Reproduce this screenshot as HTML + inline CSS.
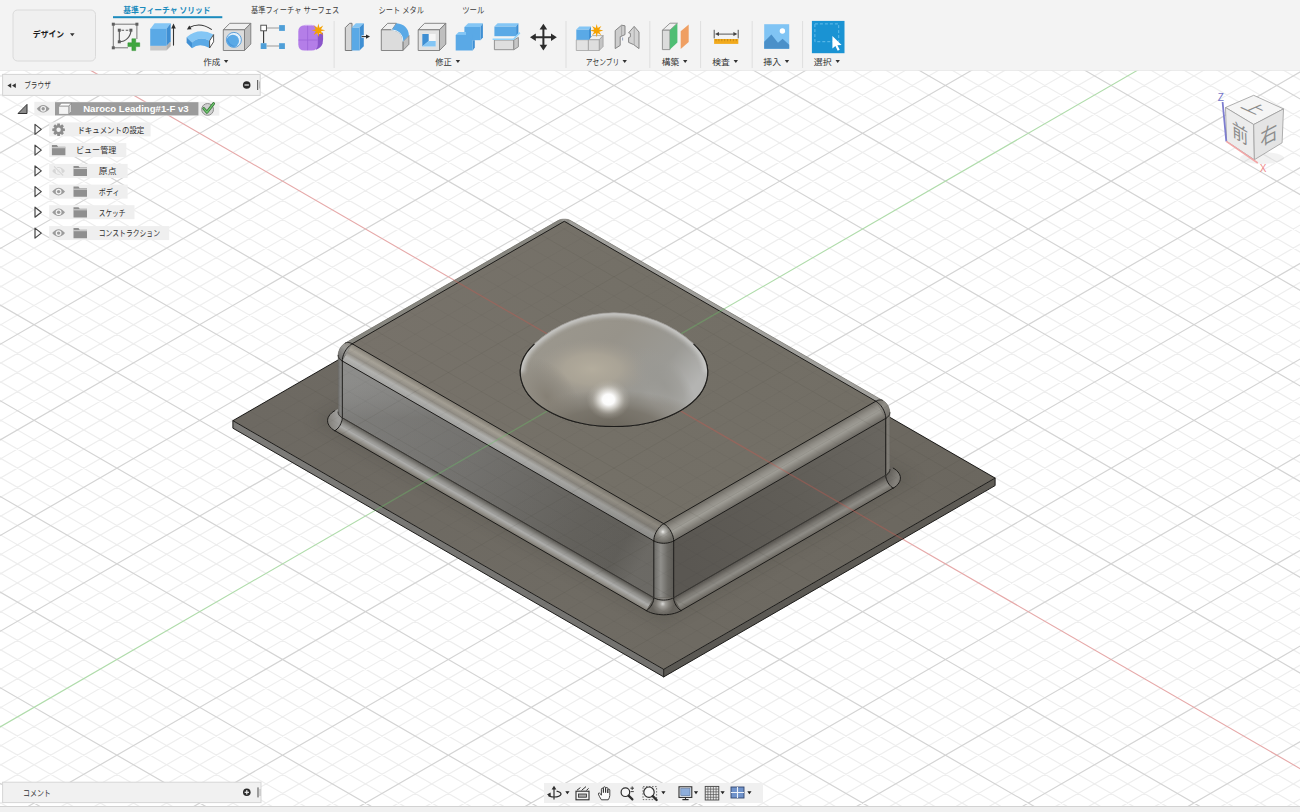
<!DOCTYPE html><html lang="ja"><head><meta charset="utf-8"><title>Fusion</title><style>
html,body{margin:0;padding:0;}
body{width:1300px;height:812px;position:relative;overflow:hidden;background:#fff;font-family:"Liberation Sans",sans-serif;}
#ui text{font-family:"Liberation Sans","Noto Sans CJK JP",sans-serif;}
</style></head><body>
<svg width="0" height="0" style="position:absolute"><defs><linearGradient id="dmA" x1="0" y1="0" x2="1" y2="0.5"><stop offset="0" stop-color="#9d998f"/><stop offset="0.5" stop-color="#97938a"/><stop offset="0.8" stop-color="#9b9a95"/><stop offset="1" stop-color="#b4b4b2"/></linearGradient><radialGradient id="dmTan"><stop offset="0" stop-color="#b5ae9e" stop-opacity="0.95"/><stop offset="0.5" stop-color="#afa899" stop-opacity="0.75"/><stop offset="1" stop-color="#a39d92" stop-opacity="0"/></radialGradient><radialGradient id="dmRband"><stop offset="0" stop-color="#989792" stop-opacity="0.9"/><stop offset="0.6" stop-color="#9a9994" stop-opacity="0.6"/><stop offset="1" stop-color="#9c9b96" stop-opacity="0"/></radialGradient><radialGradient id="dmLeft"><stop offset="0" stop-color="#837d72" stop-opacity="0.9"/><stop offset="0.6" stop-color="#8a857b" stop-opacity="0.5"/><stop offset="1" stop-color="#8a857b" stop-opacity="0"/></radialGradient><radialGradient id="dmLow"><stop offset="0" stop-color="#6a655b" stop-opacity="0.97"/><stop offset="0.5" stop-color="#746f65" stop-opacity="0.85"/><stop offset="0.8" stop-color="#7f7a70" stop-opacity="0.45"/><stop offset="1" stop-color="#857f75" stop-opacity="0"/></radialGradient><radialGradient id="dmHi"><stop offset="0" stop-color="#ffffff" stop-opacity="1"/><stop offset="0.27" stop-color="#ffffff" stop-opacity="0.97"/><stop offset="0.5" stop-color="#f0eee9" stop-opacity="0.65"/><stop offset="0.75" stop-color="#d2cfc7" stop-opacity="0.25"/><stop offset="1" stop-color="#bcb8ae" stop-opacity="0"/></radialGradient><clipPath id="cpDome"><path d="M534.5 343.8A117.2 117.2 0 0 1 693.5 343.8A93.7 54.1 0 1 1 534.5 343.8Z"/></clipPath></defs></svg>
<svg id="scene" width="1300" height="812" viewBox="0 0 1300 812" style="position:absolute;left:0;top:0">
<defs><linearGradient id="g1" gradientUnits="userSpaceOnUse" x1="232.9" y1="420.7" x2="995.1" y2="478.1"><stop offset="0" stop-color="#6d6962"/><stop offset="0.5" stop-color="#6f6b63"/><stop offset="1" stop-color="#6b675f"/></linearGradient><linearGradient id="g2" gradientUnits="userSpaceOnUse" x1="232.9" y1="420.7" x2="663.7" y2="669.4"><stop offset="0" stop-color="#7d7c79"/><stop offset="1" stop-color="#73726f"/></linearGradient><linearGradient id="g3" gradientUnits="userSpaceOnUse" x1="663.7" y1="669.4" x2="995.1" y2="478.1"><stop offset="0" stop-color="#5a5853"/><stop offset="1" stop-color="#5f5c56"/></linearGradient><clipPath id="cpPlate"><polygon points="232.9,420.7 663.7,669.4 995.1,478.1 564.3,229.4"/></clipPath><filter id="blur6" x="-20%" y="-20%" width="140%" height="140%"><feGaussianBlur stdDeviation="7"/></filter><filter id="blur2" x="-50%" y="-50%" width="200%" height="200%"><feGaussianBlur stdDeviation="2.2"/></filter><filter id="blur4" x="-50%" y="-50%" width="200%" height="200%"><feGaussianBlur stdDeviation="4"/></filter><linearGradient id="g4" gradientUnits="userSpaceOnUse" x1="342.3" y1="417.8" x2="334.8" y2="430.7"><stop offset="0" stop-color="#5f5d58"/><stop offset="0.3" stop-color="#8f8e8a"/><stop offset="0.55" stop-color="#adadab"/><stop offset="0.8" stop-color="#918e87"/><stop offset="1" stop-color="#716d65"/></linearGradient><linearGradient id="g5" gradientUnits="userSpaceOnUse" x1="673.7" y1="597.7" x2="681.1" y2="610.6"><stop offset="0" stop-color="#56534e"/><stop offset="0.35" stop-color="#7d7a74"/><stop offset="0.6" stop-color="#8e8c86"/><stop offset="1" stop-color="#6a665f"/></linearGradient><radialGradient id="g6" gradientUnits="userSpaceOnUse" cx="662.7" cy="603.8" r="11"><stop offset="0" stop-color="#d8d8d6"/><stop offset="0.25" stop-color="#a3a19c"/><stop offset="0.6" stop-color="#807d77"/><stop offset="1" stop-color="#66635d"/></radialGradient><linearGradient id="g7" gradientUnits="userSpaceOnUse" x1="352.2" y1="412.1" x2="322.4" y2="417.8"><stop offset="0" stop-color="#8f8f8d"/><stop offset="0.5" stop-color="#9e9d9a"/><stop offset="1" stop-color="#77746d"/></linearGradient><linearGradient id="g8" gradientUnits="userSpaceOnUse" x1="885.7" y1="475.2" x2="908.1" y2="485.3"><stop offset="0" stop-color="#5e5b56"/><stop offset="0.5" stop-color="#85827c"/><stop offset="1" stop-color="#6a665f"/></linearGradient><linearGradient id="g9" gradientUnits="userSpaceOnUse" x1="352.2" y1="343.8" x2="875.8" y2="401.2"><stop offset="0" stop-color="#77726a"/><stop offset="0.5" stop-color="#747067"/><stop offset="1" stop-color="#726e65"/></linearGradient><linearGradient id="g10" gradientUnits="userSpaceOnUse" x1="342.3" y1="361" x2="653.8" y2="540.9"><stop offset="0" stop-color="#8e8e8c"/><stop offset="0.45" stop-color="#7e7d7a"/><stop offset="0.8" stop-color="#6b6964"/><stop offset="0.93" stop-color="#676560"/><stop offset="1" stop-color="#75736e"/></linearGradient><linearGradient id="g11" gradientUnits="userSpaceOnUse" x1="342.3" y1="361" x2="342.3" y2="417.8"><stop offset="0" stop-color="#a0a09e" stop-opacity="0.05"/><stop offset="0.3" stop-color="#808080" stop-opacity="0"/><stop offset="1" stop-color="#3c3a36" stop-opacity="0.17"/></linearGradient><linearGradient id="g12" gradientUnits="userSpaceOnUse" x1="673.7" y1="540.9" x2="885.7" y2="418.4"><stop offset="0" stop-color="#5a5752"/><stop offset="0.5" stop-color="#605d57"/><stop offset="1" stop-color="#696660"/></linearGradient><linearGradient id="g13" gradientUnits="userSpaceOnUse" x1="352.2" y1="343.8" x2="342.3" y2="361"><stop offset="0" stop-color="#807b71"/><stop offset="0.28" stop-color="#a39e93"/><stop offset="0.5" stop-color="#8f8b83"/><stop offset="0.72" stop-color="#b0b0ad"/><stop offset="1" stop-color="#a0a09e"/></linearGradient><linearGradient id="g14" gradientUnits="userSpaceOnUse" x1="352.2" y1="343.8" x2="663.7" y2="523.7"><stop offset="0" stop-color="#ffffff" stop-opacity="0.06"/><stop offset="0.5" stop-color="#55534e" stop-opacity="0.0"/><stop offset="1" stop-color="#55534e" stop-opacity="0.3"/></linearGradient><linearGradient id="g15" gradientUnits="userSpaceOnUse" x1="663.7" y1="523.7" x2="673.7" y2="540.9"><stop offset="0" stop-color="#6d6a63"/><stop offset="0.3" stop-color="#8f8c85"/><stop offset="0.55" stop-color="#a09e97"/><stop offset="0.8" stop-color="#85827b"/><stop offset="1" stop-color="#6f6c66"/></linearGradient><linearGradient id="g16" gradientUnits="userSpaceOnUse" x1="352.2" y1="343.8" x2="345.2" y2="343.1"><stop offset="0" stop-color="#87867f"/><stop offset="0.6" stop-color="#8e8e8a"/><stop offset="1" stop-color="#a2a29e"/></linearGradient><linearGradient id="g17" gradientUnits="userSpaceOnUse" x1="564.3" y1="221.3" x2="570.1" y2="220.1"><stop offset="0" stop-color="#85837c"/><stop offset="0.6" stop-color="#8d8c87"/><stop offset="1" stop-color="#a09f9b"/></linearGradient><linearGradient id="g18" gradientUnits="userSpaceOnUse" x1="653.8" y1="540.9" x2="673.7" y2="540.9"><stop offset="0" stop-color="#6a6965"/><stop offset="0.35" stop-color="#908f8b"/><stop offset="0.7" stop-color="#6c6a65"/><stop offset="1" stop-color="#5c5a55"/></linearGradient><linearGradient id="g19" gradientUnits="userSpaceOnUse" x1="338.1" y1="361" x2="342.3" y2="361"><stop offset="0" stop-color="#6b6b69"/><stop offset="0.5" stop-color="#81817f"/><stop offset="1" stop-color="#8e8e8c"/></linearGradient><linearGradient id="g20" gradientUnits="userSpaceOnUse" x1="885.7" y1="418.4" x2="889.9" y2="418.4"><stop offset="0" stop-color="#6c6963"/><stop offset="0.5" stop-color="#817e78"/><stop offset="1" stop-color="#74716b"/></linearGradient><radialGradient id="g21" gradientUnits="userSpaceOnUse" cx="662.9" cy="531.8" r="11"><stop offset="0" stop-color="#efefed"/><stop offset="0.18" stop-color="#b9b8b4"/><stop offset="0.5" stop-color="#8d8b85"/><stop offset="1" stop-color="#6b6963"/></radialGradient><linearGradient id="g22" gradientUnits="userSpaceOnUse" x1="352.2" y1="343.8" x2="338.1" y2="355.3"><stop offset="0" stop-color="#8d8981"/><stop offset="0.45" stop-color="#9b9a96"/><stop offset="1" stop-color="#747472"/></linearGradient><linearGradient id="g23" gradientUnits="userSpaceOnUse" x1="875.8" y1="401.2" x2="889.9" y2="412.7"><stop offset="0" stop-color="#76736c"/><stop offset="0.5" stop-color="#8f8d86"/><stop offset="1" stop-color="#77746e"/></linearGradient>
<clipPath id="cpModel"><polygon points="232.9,420.7 663.7,669.4 995.1,478.1 564.3,229.4"/><polygon points="232.9,420.7 663.7,669.4 995.1,478.1 995.1,485.6 663.7,676.9 232.9,428.2"/><polygon points="338.1,355.3 338.2,354 338.6,351.8 339.3,349.8 340.2,347.9 341.5,346.2 342.9,344.7 344.4,343.6 345.2,343.1 559,220.1 559.6,219.7 562.3,219.2 562.9,219 563.6,219 564.3,219 565,219 565.6,219 566.3,219.2 569,219.7 569.6,220.1 882.8,400.5 883.6,401 885.1,402.1 886.5,403.6 887.8,405.3 888.7,407.2 889.4,409.2 889.8,411.4 889.9,412.7 889.9,469.5 885.8,475.2 673.6,597.7 653.8,597.7 342.2,417.8 338.1,412.1"/><polygon points="327.6,420.7 327.8,418.9 328.4,417 329.5,415.3 330.9,413.6 332.7,412.1 334.8,410.7 342.2,406.4 342.2,417.8 342.2,419 342,420.2 341.7,421.5 341.2,422.7 340.7,424 340.1,425.2 339.3,426.4 338.5,427.4 337.6,428.4 336.7,429.3 335.8,430.1 334.8,430.8 332.7,429.4 330.9,427.8 329.5,426.1 328.4,424.4 327.8,422.6"/><path d="M534.5 343.8A117.2 117.2 0 0 1 693.5 343.8A93.7 54.1 0 1 1 534.5 343.8Z"/></clipPath>
<clipPath id="cpTop"><polygon points="352.2,343.8 663.7,523.7 875.8,401.2 564.3,221.3"/></clipPath>
<g id="gridg"><path d="M-2 801.3L19.9 814M-2 763.1L86.2 814M-2 743.9L119.4 814M-2 724.8L152.5 814M-2 705.7L185.6 814M-2 77.6L28.5 60M-2 667.4L251.9 814M-2 96.7L61.6 60M-2 648.3L285.1 814M-2 115.9L94.8 60M-2 629.1L318.2 814M-2 135L127.9 60M-2 610L351.3 814M-2 173.3L194.2 60M-2 571.7L417.6 814M-2 192.4L227.3 60M-2 552.6L450.8 814M-2 211.5L260.5 60M-2 533.5L483.9 814M-2 230.7L293.6 60M-2 514.3L517 814M-2 268.9L359.9 60M-2 476.1L583.3 814M-2 288.1L393 60M-2 456.9L616.5 814M-2 307.2L426.2 60M-2 437.8L649.6 814M-2 326.3L459.3 60M-2 418.7L682.7 814M-2 364.6L525.6 60M-2 380.4L749 814M-2 383.7L558.7 60M-2 361.3L782.2 814M-2 402.9L591.9 60M-2 342.1L815.3 814M-2 422L625 60M-2 323L848.4 814M-2 460.3L691.3 60M-2 284.7L914.7 814M-2 479.4L724.4 60M-2 265.6L947.9 814M-2 498.6L757.6 60M-2 246.4L981 814M-2 517.7L790.7 60M-2 227.3L1014.1 814M-2 556L857 60M-2 189L1080.4 814M-2 575.1L890.1 60M-2 169.9L1113.6 814M-2 594.2L923.3 60M-2 150.8L1146.7 814M-2 613.4L956.4 60M-2 131.6L1179.8 814M-2 651.6L1022.7 60M-2 93.4L1246.1 814M-2 670.8L1055.8 60M-2 74.2L1279.3 814M-2 689.9L1089 60M6.5 60L1302 808M-2 709L1122.1 60M39.6 60L1302 788.9M-2 747.3L1188.4 60M105.9 60L1302 750.6M-2 766.4L1221.5 60M139 60L1302 731.5M-2 785.6L1254.7 60M172.2 60L1302 712.3M-2 804.7L1287.8 60M205.3 60L1302 693.2M48.2 814L1302 90.1M271.6 60L1302 654.9M81.3 814L1302 109.2M304.7 60L1302 635.8M114.4 814L1302 128.3M337.9 60L1302 616.7M147.6 814L1302 147.5M371 60L1302 597.5M213.9 814L1302 185.7M437.3 60L1302 559.3M247 814L1302 204.9M470.4 60L1302 540.1M280.1 814L1302 224M503.6 60L1302 521M313.3 814L1302 243.1M536.7 60L1302 501.9M379.6 814L1302 281.4M603 60L1302 463.6M412.7 814L1302 300.5M636.1 60L1302 444.5M445.8 814L1302 319.7M669.3 60L1302 425.3M479 814L1302 338.8M702.4 60L1302 406.2M545.3 814L1302 377.1M768.7 60L1302 367.9M578.4 814L1302 396.2M801.8 60L1302 348.8M611.5 814L1302 415.4M835 60L1302 329.6M644.7 814L1302 434.5M868.1 60L1302 310.5M711 814L1302 472.8M934.4 60L1302 272.2M744.1 814L1302 491.9M967.5 60L1302 253.1M777.2 814L1302 511M1000.7 60L1302 234M810.4 814L1302 530.2M1033.8 60L1302 214.8M876.7 814L1302 568.4M1100.1 60L1302 176.6M909.8 814L1302 587.6M1133.2 60L1302 157.4M942.9 814L1302 606.7M1166.4 60L1302 138.3M976.1 814L1302 625.8M1199.5 60L1302 119.2M1042.4 814L1302 664.1M1265.8 60L1302 80.9M1075.5 814L1302 683.2M1298.9 60L1302 61.8M1108.6 814L1302 702.4M1141.8 814L1302 721.5M1208.1 814L1302 759.8M1241.2 814L1302 778.9M1274.3 814L1302 798" stroke="#eeeeee" stroke-width="1.2" fill="none"/><path d="M-2 782.2L53.1 814M-2 686.5L218.8 814M-2 154.1L161 60M-2 590.9L384.5 814M-2 249.8L326.7 60M-2 495.2L550.2 814M-2 345.5L492.4 60M-2 399.5L715.9 814M-2 441.1L658.1 60M-2 303.9L881.6 814M-2 536.8L823.8 60M-2 208.2L1047.3 814M-2 632.5L989.5 60M-2 112.5L1213 814M15 814L1302 70.9M238.5 60L1302 674.1M180.7 814L1302 166.6M404.2 60L1302 578.4M346.4 814L1302 262.3M569.9 60L1302 482.7M512.1 814L1302 358M735.6 60L1302 387M677.8 814L1302 453.6M901.3 60L1302 291.4M843.5 814L1302 549.3M1067 60L1302 195.7M1009.2 814L1302 645M1232.7 60L1302 100M1174.9 814L1302 740.6" stroke="#d4d4d4" stroke-width="1.2" fill="none"/></g>
<g id="axes"><line x1="-1043" y1="-584.2" x2="2271" y2="1329.2" stroke="#e6a9a9" stroke-width="1.1"/><line x1="-1043" y1="1329.2" x2="2271" y2="-584.2" stroke="#b0dcab" stroke-width="1.1"/></g>
</defs>
<rect width="1300" height="812" fill="#fff"/>
<use href="#gridg"/><use href="#axes"/>
<g id="mdl">
<polygon points="232.9,420.7 663.7,669.4 995.1,478.1 564.3,229.4" fill="url(#g1)" />
<polygon points="232.9,420.7 663.7,669.4 663.7,676.9 232.9,428.2" fill="url(#g2)" />
<polygon points="663.7,669.4 995.1,478.1 995.1,485.6 663.7,676.9" fill="url(#g3)" />
<g clip-path="url(#cpPlate)"><polygon points="312.4,420.7 663.7,623.5 915.6,478.1 564.3,275.3" fill="#4e4b45" opacity="0.30" filter="url(#blur6)"/></g>
<path d="M564.3 229.4 L232.9 420.7 L663.7 669.4 L995.1 478.1 L564.3 229.4M232.9 420.7 L232.9 428.2 L663.7 676.9 L995.1 485.6 L995.1 478.1M663.7 669.4 L663.7 676.9" fill="none" stroke="#1d1c1a" stroke-width="1" stroke-linejoin="round" stroke-linecap="round"/>
<polygon points="342.3,417.8 653.8,597.7 646.3,610.6 334.8,430.7" fill="url(#g4)" />
<polygon points="673.7,597.7 885.7,475.2 893.2,488.1 681.1,610.6" fill="url(#g5)" />
<polygon points="646.3,610.6 653.8,597.7 673.6,597.7 681.1,610.6 678.7,611.8 676,612.9 673.1,613.7 670.1,614.3 666.9,614.6 663.7,614.8 660.5,614.6 657.3,614.3 654.3,613.7 651.4,612.9 648.7,611.8" fill="url(#g6)" />
<polygon points="327.6,420.7 327.8,418.9 328.4,417 329.5,415.3 330.9,413.6 332.7,412.1 334.8,410.7 342.2,406.4 342.2,417.8 342.2,419 342,420.2 341.7,421.5 341.2,422.7 340.7,424 340.1,425.2 339.3,426.4 338.5,427.4 337.6,428.4 336.7,429.3 335.8,430.1 334.8,430.8 332.7,429.4 330.9,427.8 329.5,426.1 328.4,424.4 327.8,422.6" fill="url(#g7)" />
<polygon points="885.8,463.8 893.2,468.1 895.3,469.5 897.1,471 898.5,472.7 899.6,474.4 900.2,476.2 900.4,478.1 900.2,480 899.6,481.8 898.5,483.5 897.1,485.2 895.3,486.8 893.2,488.1 892.2,487.5 891.3,486.7 890.4,485.9 889.5,484.8 888.7,483.8 887.9,482.6 887.3,481.4 886.8,480.1 886.3,478.9 886,477.6 885.8,476.4 885.8,475.2" fill="url(#g8)" />
<path d="M334.8 430.7 L646.3 610.6M681.1 610.6 L893.2 488.1M646.3 610.6 L648.4 611.7 L650.6 612.6 L653 613.4 L655.6 614 L658.2 614.4 L661 614.7 L663.7 614.8 L666.5 614.7 L669.2 614.4 L671.8 614 L674.4 613.4 L676.8 612.6 L679.1 611.7 L681.1 610.6M334.8 410.7 L333 411.8 L331.4 413.1 L330 414.5 L329 416 L328.2 417.5 L327.7 419.1 L327.6 420.7 L327.7 422.3 L328.2 423.9 L329 425.4 L330 426.9 L331.4 428.3 L333 429.6 L334.8 430.7M893.2 488.1 L895 487 L896.6 485.7 L898 484.3 L899 482.8 L899.8 481.3 L900.3 479.7 L900.4 478.1 L900.3 476.5 L899.8 474.9 L899 473.4 L898 471.9 L896.6 470.5 L895 469.2 L893.2 468.1" fill="none" stroke="#1d1c1a" stroke-width="1" stroke-linejoin="round" stroke-linecap="round"/>
<polygon points="338.1,355.3 338.2,354 338.6,351.8 339.3,349.8 340.2,347.9 341.5,346.2 342.9,344.7 344.4,343.6 345.2,343.1 559,220.1 559.6,219.7 562.3,219.2 562.9,219 563.6,219 564.3,219 565,219 565.6,219 566.3,219.2 569,219.7 569.6,220.1 882.8,400.5 883.6,401 885.1,402.1 886.5,403.6 887.8,405.3 888.7,407.2 889.4,409.2 889.8,411.4 889.9,412.7 889.9,469.5 885.8,475.2 673.6,597.7 653.8,597.7 342.2,417.8 338.1,412.1" fill="#747067" />
<polygon points="352.2,343.8 663.7,523.7 875.8,401.2 564.3,221.3" fill="url(#g9)" />
<polygon points="342.3,361 653.8,540.9 653.8,597.7 342.3,417.8" fill="url(#g10)" />
<polygon points="342.3,361 653.8,540.9 653.8,597.7 342.3,417.8" fill="url(#g11)" />
<polygon points="673.7,540.9 885.7,418.4 885.7,475.2 673.7,597.7" fill="url(#g12)" />
<polygon points="352.2,343.8 663.7,523.7 653.8,540.9 342.3,361" fill="url(#g13)" />
<polygon points="352.2,343.8 663.7,523.7 653.8,540.9 342.3,361" fill="url(#g14)" />
<polygon points="663.7,523.7 875.8,401.2 885.7,418.4 673.7,540.9" fill="url(#g15)" />
<polygon points="352.2,343.8 564.3,221.3 558.5,220.1 345.2,343.1" fill="url(#g16)" />
<polygon points="564.3,221.3 875.8,401.2 882.8,400.5 570.1,220.1" fill="url(#g17)" />
<polygon points="653.8,540.9 673.7,540.9 673.7,597.7 653.8,597.7" fill="url(#g18)" />
<polygon points="342.3,361 338.1,355.3 338.1,412.1 342.3,417.8" fill="url(#g19)" />
<polygon points="885.7,418.4 889.9,412.7 889.9,469.5 885.7,475.2" fill="url(#g20)" />
<polygon points="653.8,540.9 653.8,539.6 654,538.2 654.3,536.8 654.8,535.3 655.3,533.9 655.9,532.5 656.7,531.1 657.5,529.7 658.4,528.5 659.4,527.3 660.4,526.2 661.5,525.2 662.6,524.4 663.7,523.7 664.8,524.4 665.9,525.2 667,526.2 668,527.3 669,528.5 669.9,529.7 670.7,531.1 671.5,532.5 672.1,533.9 672.7,535.3 673.1,536.8 673.4,538.2 673.6,539.6 673.6,540.9 672.5,541.5 671.2,542 669.8,542.5 668.4,542.8 666.8,543 665.3,543.2 663.7,543.2 662.1,543.2 660.6,543 659.1,542.8 657.6,542.5 656.2,542 654.9,541.5" fill="url(#g21)" />
<polygon points="338.1,355.3 338.2,354 338.6,351.8 339.3,349.8 340.2,347.9 341.5,346.2 342.9,344.7 344.4,343.6 345.2,343.1 346,342.7 346.9,342.5 347.9,342.4 348.9,342.6 350,342.8 351.1,343.2 352.2,343.8 342.2,361 341.2,360.3 340.3,359.6 339.5,358.8 338.9,358 338.5,357.1 338.2,356.2" fill="url(#g22)" />
<polygon points="875.8,401.2 876.9,400.6 878,400.2 879.1,399.9 880.1,399.9 881.1,399.9 882,400.1 882.8,400.5 883.6,401 885.1,402.1 886.5,403.6 887.8,405.3 888.7,407.2 889.4,409.2 889.8,411.4 889.9,412.7 889.8,413.6 889.5,414.5 889.1,415.4 888.5,416.2 887.7,417 886.8,417.7 885.8,418.4" fill="url(#g23)" />
<polygon points="559,220.1 559.6,219.7 562.3,219.2 562.9,219 563.6,219 564.3,219 565,219 565.6,219 566.3,219.2 569,219.7 569.6,220.1 564.3,221.3" fill="#9c9b97" />
<path d="M352.2 343.8 L663.7 523.7 L875.8 401.2 L564.3 221.3 L352.2 343.8M342.3 361 L653.8 540.9M342.3 417.8 L653.8 597.7M673.7 540.9 L885.7 418.4M673.7 597.7 L885.7 475.2M653.8 540.9 L653.8 597.7M673.7 540.9 L673.7 597.7M342.3 361 L342.3 417.8M885.7 418.4 L885.7 475.2M663.7 523.7 L662.4 524.5 L661.1 525.5 L659.9 526.7 L658.7 528.1 L657.7 529.5 L656.7 531.1 L655.8 532.7 L655.1 534.4 L654.5 536 L654.1 537.7 L653.9 539.3 L653.8 540.9M663.7 523.7 L665 524.5 L666.3 525.5 L667.5 526.7 L668.7 528.1 L669.8 529.5 L670.7 531.1 L671.6 532.7 L672.3 534.4 L672.9 536 L673.3 537.7 L673.6 539.3 L673.7 540.9M653.8 540.9 L655.2 541.6 L656.7 542.2 L658.3 542.6 L660.1 543 L661.9 543.2 L663.7 543.3 L665.5 543.2 L667.3 543 L669.1 542.6 L670.7 542.2 L672.3 541.6 L673.7 540.9M352.2 343.8 L350.9 344.6 L349.6 345.7 L348.4 346.9 L347.2 348.2 L346.1 349.7 L345.2 351.2 L344.3 352.8 L343.6 354.5 L343 356.2 L342.6 357.9 L342.3 359.5 L342.3 361M342.3 361 L341.6 360.6 L341 360.2 L340.5 359.8 L340 359.3 L339.6 358.9 L339.2 358.4 L338.9 357.9 L338.6 357.4 L338.4 356.9 L338.3 356.3 L338.2 355.8 L338.1 355.3M352.2 343.8 L351.5 343.4 L350.9 343.1 L350.3 342.9 L349.6 342.7 L349 342.6 L348.4 342.5 L347.8 342.4 L347.2 342.5 L346.7 342.5 L346.1 342.7 L345.6 342.9 L345.2 343.1M875.8 401.2 L877.1 402 L878.4 403.1 L879.6 404.3 L880.8 405.6 L881.9 407.1 L882.8 408.6 L883.7 410.2 L884.4 411.9 L885 413.6 L885.4 415.3 L885.7 416.9 L885.7 418.4M885.7 418.4 L886.4 418 L887 417.6 L887.5 417.2 L888 416.7 L888.4 416.3 L888.8 415.8 L889.1 415.3 L889.4 414.8 L889.6 414.3 L889.7 413.7 L889.8 413.2 L889.9 412.7M875.8 401.2 L876.5 400.9 L877.1 400.5 L877.7 400.3 L878.4 400.1 L879 400 L879.6 399.9 L880.2 399.8 L880.8 399.9 L881.3 399.9 L881.9 400.1 L882.4 400.3 L882.8 400.5M653.8 597.7 L655.2 598.4 L656.7 599 L658.3 599.5 L660.1 599.8 L661.9 600 L663.7 600.1 L665.5 600 L667.3 599.8 L669.1 599.5 L670.7 599 L672.3 598.4 L673.7 597.7M342.3 417.8 L341.6 417.4 L341 417 L340.5 416.6 L340 416.2 L339.6 415.7 L339.2 415.2 L338.9 414.7 L338.6 414.2 L338.4 413.7 L338.3 413.2 L338.2 412.6 L338.1 412.1M885.7 475.2 L886.4 474.8 L887 474.4 L887.5 474 L888 473.6 L888.4 473.1 L888.8 472.6 L889.1 472.1 L889.4 471.6 L889.6 471.1 L889.7 470.6 L889.8 470 L889.9 469.5M646.3 610.6 L647.5 609.8 L648.6 608.9 L649.7 607.7 L650.7 606.4 L651.6 605 L652.3 603.6 L653 602.1 L653.4 600.6 L653.7 599.1 L653.8 597.7M681.1 610.6 L679.9 609.8 L678.8 608.9 L677.7 607.7 L676.7 606.4 L675.8 605 L675.1 603.6 L674.5 602.1 L674 600.6 L673.7 599.1 L673.7 597.7M334.8 430.7 L336 430 L337.1 429 L338.2 427.9 L339.2 426.6 L340.1 425.2 L340.8 423.7 L341.4 422.2 L341.9 420.7 L342.2 419.2 L342.3 417.8M893.2 488.1 L892 487.4 L890.9 486.4 L889.8 485.3 L888.8 484 L887.9 482.6 L887.2 481.1 L886.6 479.6 L886.1 478.1 L885.8 476.6 L885.7 475.2" fill="none" stroke="#1d1c1a" stroke-width="1" stroke-linejoin="round" stroke-linecap="round"/>
<path d="M338.1 355.3 L338.2 354 L338.6 351.8 L339.3 349.8 L340.2 347.9 L341.5 346.2 L342.9 344.7 L344.4 343.6 L345.2 343.1 L559 220.1 L559.6 219.7 L562.3 219.2 L562.9 219 L563.6 219 L564.3 219 L565 219 L565.6 219 L566.3 219.2 L569 219.7 L569.6 220.1 L882.8 400.5 L883.6 401 L885.1 402.1 L886.5 403.6 L887.8 405.3 L888.7 407.2 L889.4 409.2 L889.8 411.4 L889.9 412.7 L889.9 469.5 L885.8 475.2 L673.6 597.7 L653.8 597.7 L342.2 417.8 L338.1 412.1 L338.1 355.3" fill="none" stroke="#6b6964" stroke-width="0.7" stroke-linejoin="round" opacity="0.55"/>
<g><path d="M534.5 343.8A117.2 117.2 0 0 1 693.5 343.8A93.7 54.1 0 1 1 534.5 343.8Z" fill="url(#dmA)"/><g clip-path="url(#cpDome)"><ellipse cx="592" cy="369" rx="56" ry="30" fill="url(#dmTan)"/><ellipse cx="664" cy="384" rx="22" ry="44" fill="url(#dmRband)" transform="rotate(-38 664 384)"/><ellipse cx="547" cy="397" rx="28" ry="44" fill="url(#dmLeft)" transform="rotate(-35 547 397)"/><ellipse cx="610" cy="428" rx="100" ry="38" fill="url(#dmLow)"/><path d="M520.3 372.5A93.7 54.1 0 0 1 534.5 343.8A117.2 117.2 0 0 1 693.5 343.8A93.7 54.1 0 0 1 707.7 372.5" fill="none" stroke="#cbcbc9" stroke-width="7.5" filter="url(#blur2)" opacity="0.95"/><ellipse cx="608.5" cy="399.5" rx="22" ry="20" fill="url(#dmHi)"/></g><path d="M534.5 343.8A117.2 117.2 0 0 1 693.5 343.8A93.7 54.1 0 1 1 534.5 343.8Z" fill="none" stroke="#8d8a84" stroke-width="0.8" opacity="0.7"/><path d="M693.5 343.8A93.7 54.1 0 1 1 534.5 343.8" fill="none" stroke="#1d1c1a" stroke-width="1.1"/></g>
</g>
<g clip-path="url(#cpModel)"><g opacity="0.085"><path d="M-2 782.2L53.1 814M-2 686.5L218.8 814M-2 154.1L161 60M-2 590.9L384.5 814M-2 249.8L326.7 60M-2 495.2L550.2 814M-2 345.5L492.4 60M-2 399.5L715.9 814M-2 441.1L658.1 60M-2 303.9L881.6 814M-2 536.8L823.8 60M-2 208.2L1047.3 814M-2 632.5L989.5 60M-2 112.5L1213 814M15 814L1302 70.9M238.5 60L1302 674.1M180.7 814L1302 166.6M404.2 60L1302 578.4M346.4 814L1302 262.3M569.9 60L1302 482.7M512.1 814L1302 358M735.6 60L1302 387M677.8 814L1302 453.6M901.3 60L1302 291.4M843.5 814L1302 549.3M1067 60L1302 195.7M1009.2 814L1302 645M1232.7 60L1302 100M1174.9 814L1302 740.6" stroke="#3a3733" stroke-width="1" fill="none"/></g>
<g opacity="0.035"><path d="M-2 801.3L19.9 814M-2 763.1L86.2 814M-2 743.9L119.4 814M-2 724.8L152.5 814M-2 705.7L185.6 814M-2 77.6L28.5 60M-2 667.4L251.9 814M-2 96.7L61.6 60M-2 648.3L285.1 814M-2 115.9L94.8 60M-2 629.1L318.2 814M-2 135L127.9 60M-2 610L351.3 814M-2 173.3L194.2 60M-2 571.7L417.6 814M-2 192.4L227.3 60M-2 552.6L450.8 814M-2 211.5L260.5 60M-2 533.5L483.9 814M-2 230.7L293.6 60M-2 514.3L517 814M-2 268.9L359.9 60M-2 476.1L583.3 814M-2 288.1L393 60M-2 456.9L616.5 814M-2 307.2L426.2 60M-2 437.8L649.6 814M-2 326.3L459.3 60M-2 418.7L682.7 814M-2 364.6L525.6 60M-2 380.4L749 814M-2 383.7L558.7 60M-2 361.3L782.2 814M-2 402.9L591.9 60M-2 342.1L815.3 814M-2 422L625 60M-2 323L848.4 814M-2 460.3L691.3 60M-2 284.7L914.7 814M-2 479.4L724.4 60M-2 265.6L947.9 814M-2 498.6L757.6 60M-2 246.4L981 814M-2 517.7L790.7 60M-2 227.3L1014.1 814M-2 556L857 60M-2 189L1080.4 814M-2 575.1L890.1 60M-2 169.9L1113.6 814M-2 594.2L923.3 60M-2 150.8L1146.7 814M-2 613.4L956.4 60M-2 131.6L1179.8 814M-2 651.6L1022.7 60M-2 93.4L1246.1 814M-2 670.8L1055.8 60M-2 74.2L1279.3 814M-2 689.9L1089 60M6.5 60L1302 808M-2 709L1122.1 60M39.6 60L1302 788.9M-2 747.3L1188.4 60M105.9 60L1302 750.6M-2 766.4L1221.5 60M139 60L1302 731.5M-2 785.6L1254.7 60M172.2 60L1302 712.3M-2 804.7L1287.8 60M205.3 60L1302 693.2M48.2 814L1302 90.1M271.6 60L1302 654.9M81.3 814L1302 109.2M304.7 60L1302 635.8M114.4 814L1302 128.3M337.9 60L1302 616.7M147.6 814L1302 147.5M371 60L1302 597.5M213.9 814L1302 185.7M437.3 60L1302 559.3M247 814L1302 204.9M470.4 60L1302 540.1M280.1 814L1302 224M503.6 60L1302 521M313.3 814L1302 243.1M536.7 60L1302 501.9M379.6 814L1302 281.4M603 60L1302 463.6M412.7 814L1302 300.5M636.1 60L1302 444.5M445.8 814L1302 319.7M669.3 60L1302 425.3M479 814L1302 338.8M702.4 60L1302 406.2M545.3 814L1302 377.1M768.7 60L1302 367.9M578.4 814L1302 396.2M801.8 60L1302 348.8M611.5 814L1302 415.4M835 60L1302 329.6M644.7 814L1302 434.5M868.1 60L1302 310.5M711 814L1302 472.8M934.4 60L1302 272.2M744.1 814L1302 491.9M967.5 60L1302 253.1M777.2 814L1302 511M1000.7 60L1302 234M810.4 814L1302 530.2M1033.8 60L1302 214.8M876.7 814L1302 568.4M1100.1 60L1302 176.6M909.8 814L1302 587.6M1133.2 60L1302 157.4M942.9 814L1302 606.7M1166.4 60L1302 138.3M976.1 814L1302 625.8M1199.5 60L1302 119.2M1042.4 814L1302 664.1M1265.8 60L1302 80.9M1075.5 814L1302 683.2M1298.9 60L1302 61.8M1108.6 814L1302 702.4M1141.8 814L1302 721.5M1208.1 814L1302 759.8M1241.2 814L1302 778.9M1274.3 814L1302 798" stroke="#3a3733" stroke-width="1" fill="none"/></g>
<line x1="-1043" y1="-584.2" x2="2271" y2="1329.2" stroke="#c85a50" stroke-width="1.4" opacity="0.38"/><line x1="-1043" y1="1329.2" x2="2271" y2="-584.2" stroke="#6cc068" stroke-width="1.4" opacity="0.38"/></g>
<g><path d="M534.5 343.8A117.2 117.2 0 0 1 693.5 343.8A93.7 54.1 0 1 1 534.5 343.8Z" fill="url(#dmA)"/><g clip-path="url(#cpDome)"><ellipse cx="592" cy="369" rx="56" ry="30" fill="url(#dmTan)"/><ellipse cx="664" cy="384" rx="22" ry="44" fill="url(#dmRband)" transform="rotate(-38 664 384)"/><ellipse cx="547" cy="397" rx="28" ry="44" fill="url(#dmLeft)" transform="rotate(-35 547 397)"/><ellipse cx="610" cy="428" rx="100" ry="38" fill="url(#dmLow)"/><path d="M520.3 372.5A93.7 54.1 0 0 1 534.5 343.8A117.2 117.2 0 0 1 693.5 343.8A93.7 54.1 0 0 1 707.7 372.5" fill="none" stroke="#cbcbc9" stroke-width="7.5" filter="url(#blur2)" opacity="0.95"/><ellipse cx="608.5" cy="399.5" rx="22" ry="20" fill="url(#dmHi)"/></g><path d="M534.5 343.8A117.2 117.2 0 0 1 693.5 343.8A93.7 54.1 0 1 1 534.5 343.8Z" fill="none" stroke="#8d8a84" stroke-width="0.8" opacity="0.7"/><path d="M693.5 343.8A93.7 54.1 0 1 1 534.5 343.8" fill="none" stroke="#1d1c1a" stroke-width="1.1"/></g>
</svg>
<svg id="ui" width="1300" height="812" viewBox="0 0 1300 812" style="position:absolute;left:0;top:0"><rect x="0" y="0" width="1300" height="70.3" fill="#f3f3f3"/>
<rect x="0" y="70" width="1300" height="0.8" fill="#e6e6e6"/>
<rect x="13" y="10" width="82.5" height="51" rx="4.5" fill="#f0f0f0" stroke="#dadada" stroke-width="1"/>
<text x="32.8" y="37.4" font-size="8.5" font-weight="bold" fill="#1c1c1c" textLength="31.4" lengthAdjust="spacingAndGlyphs">デザイン</text>
<polygon points="70.0,33.3 74.6,33.3 72.3,36.3" fill="#333"/>
<text x="123.3" y="12.5" font-size="8.5" font-weight="bold" fill="#1b8bbd" textLength="87.3" lengthAdjust="spacingAndGlyphs">基準フィーチャ ソリッド</text>
<rect x="113" y="16.2" width="109.3" height="2" fill="#1b8bbd"/>
<text x="251" y="12.5" font-size="8.5" fill="#3c3c3c" textLength="88.2" lengthAdjust="spacingAndGlyphs">基準フィーチャ サーフェス</text>
<text x="378.6" y="12.5" font-size="8.5" fill="#3c3c3c" textLength="45.3" lengthAdjust="spacingAndGlyphs">シート メタル</text>
<text x="462.2" y="12.5" font-size="8.5" fill="#3c3c3c" textLength="22.2" lengthAdjust="spacingAndGlyphs">ツール</text>
<text x="203.3" y="65.3" font-size="8.5" fill="#333" textLength="17.1" lengthAdjust="spacingAndGlyphs">作成</text>
<polygon points="223.9,60.1 228.29999999999998,60.1 226.1,63.1" fill="#333"/>
<text x="435.2" y="65.3" font-size="8.5" fill="#333" textLength="16.6" lengthAdjust="spacingAndGlyphs">修正</text>
<polygon points="455.7,60.1 460.09999999999997,60.1 457.9,63.1" fill="#333"/>
<text x="585.8" y="65.3" font-size="8.5" fill="#333" textLength="33.4" lengthAdjust="spacingAndGlyphs">アセンブリ</text>
<polygon points="622.5,60.1 626.9000000000001,60.1 624.7,63.1" fill="#333"/>
<text x="661.8" y="65.3" font-size="8.5" fill="#333" textLength="17.4" lengthAdjust="spacingAndGlyphs">構築</text>
<polygon points="683.0,60.1 687.4000000000001,60.1 685.2,63.1" fill="#333"/>
<text x="712.2" y="65.3" font-size="8.5" fill="#333" textLength="17.6" lengthAdjust="spacingAndGlyphs">検査</text>
<polygon points="733.5999999999999,60.1 738.0,60.1 735.8,63.1" fill="#333"/>
<text x="763.3" y="65.3" font-size="8.5" fill="#333" textLength="17.7" lengthAdjust="spacingAndGlyphs">挿入</text>
<polygon points="784.8,60.1 789.2,60.1 787,63.1" fill="#333"/>
<text x="813.8" y="65.3" font-size="8.5" fill="#333" textLength="17.8" lengthAdjust="spacingAndGlyphs">選択</text>
<polygon points="835.5,60.1 839.9000000000001,60.1 837.7,63.1" fill="#333"/>
<rect x="333.6" y="21" width="1" height="47" fill="#dedede"/>
<rect x="565.5" y="21" width="1" height="47" fill="#dedede"/>
<rect x="649.3" y="21" width="1" height="47" fill="#dedede"/>
<rect x="700.1" y="21" width="1" height="47" fill="#dedede"/>
<rect x="751.7" y="21" width="1" height="47" fill="#dedede"/>
<rect x="802.1" y="21" width="1" height="47" fill="#dedede"/><path d="M136.9 24.2H113.3V47.8H128" fill="none" stroke="#727272" stroke-width="0.95"/><path d="M136.9 24.2V39" fill="none" stroke="#727272" stroke-width="0.95"/>
<rect x="111.8" y="22.7" width="3" height="3" fill="#606060"/>
<rect x="135.4" y="22.7" width="3" height="3" fill="#606060"/>
<rect x="111.8" y="46.3" width="3" height="3" fill="#606060"/>
<path d="M119.3 30.2V41.8" stroke="#555" stroke-width="1.1" fill="none"/><path d="M121.5 30.2H129" stroke="#555" stroke-width="1.1" stroke-dasharray="2.6 1.6" fill="none"/>
<path d="M130.9 30.2A11.6 11.6 0 0 1 119.3 41.8" stroke="#555" stroke-width="1.1" fill="none"/>
<rect x="117.8" y="28.7" width="3" height="3" fill="#5c5c5c"/>
<rect x="129.4" y="28.7" width="3" height="3" fill="#5c5c5c"/>
<rect x="117.8" y="40.3" width="3" height="3" fill="#5c5c5c"/>
<path d="M131.9 38.8h3.8v4h4v3.8h-4v4h-3.8v-4h-4v-3.8h4z" fill="#3fa63f" stroke="#2e8f2e" stroke-width="0.5"/>
<polygon points="150.2,28.9 154.6,23.3 170.7,23.3 166.4,28.9" fill="#84c6f5" />
<polygon points="166.4,28.9 170.7,23.3 170.7,41.6 166.4,45.9" fill="#3f8fd3" />
<polygon points="150.2,28.9 166.4,28.9 166.4,45.9 150.2,45.9" fill="#5aa9e6" />
<polygon points="150.2,45.9 166.4,45.9 166.4,50.5 150.2,50.5" fill="#c9c9c9" />
<polygon points="166.4,45.9 170.7,41.6 170.7,46.2 166.4,50.5" fill="#b1b1b1" />
<path d="M173.5 45.6V27" stroke="#333" stroke-width="1.1"/><polygon points="171.2,28.6 173.5,23.6 175.8,28.6" fill="#2c2c2c" />
<path d="M186.6 37.2Q199 26.8 213.6 34.6L209.6 40.8Q199.5 35.6 192 42.6Z" fill="#84c6f5"/>
<path d="M192 42.6Q199.5 35.6 209.6 40.8V48Q199.5 42.6 192 48.2Z" fill="#5aa9e6"/>
<path d="M186.6 37.2L192 42.6V48.2L186.6 42.8Z" fill="#3f8fd3"/>
<path d="M213.6 34.6L209.6 40.8V48L213.6 41.8Z" fill="#fff" stroke="#444" stroke-width="0.9" stroke-linejoin="round"/>
<path d="M211.8 29.6Q200 21.6 189.4 27.6" fill="none" stroke="#333" stroke-width="1.1"/><polygon points="186.9,29.6 191.6,29.3 189.3,25.6" fill="#2c2c2c" />
<polygon points="223.3,29.8 229.8,23.3 250.8,23.3 244.5,29.8" fill="#f0f0f0" stroke="#7a7a7a" stroke-width="0.9" stroke-linejoin="round" />
<polygon points="244.5,29.8 250.8,23.3 250.8,44 244.5,50.5" fill="#bfbfbf" stroke="#7a7a7a" stroke-width="0.9" stroke-linejoin="round" />
<polygon points="223.3,29.8 244.5,29.8 244.5,50.5 223.3,50.5" fill="#dcdcdc" stroke="#7a7a7a" stroke-width="0.9" stroke-linejoin="round" />
<circle cx="233.9" cy="39.9" r="7.5" fill="#e4f1fb" stroke="#4f97d6" stroke-width="0.9"/><circle cx="232.9" cy="40.9" r="6.1" fill="#5aa9e6"/>
<path d="M228.6 36.6A7 7 0 0 0 237.6 45.4A6.4 6.4 0 0 1 228.6 36.6Z" fill="#4a98dc"/>
<path d="M266.5 28H279.2M266.5 46H279.2" stroke="#9a9a9a" stroke-width="1.2"/><path d="M263.6 30.7V43.2" stroke="#333" stroke-width="1.1"/>
<rect x="260.8" y="25.2" width="5.6" height="5.6" fill="#fff" stroke="#444" stroke-width="0.9"/>
<rect x="279.1" y="25.1" width="5.8" height="5.8" fill="#4f9fd8"/>
<rect x="260.7" y="43.2" width="5.8" height="5.8" fill="#4f9fd8"/>
<rect x="279.1" y="43.2" width="5.8" height="5.8" fill="#4f9fd8"/>
<path d="M316 35.5L323 32.5Q323.4 39 322.6 43.5Q321.6 47.4 316 49.8Z" fill="#8a55ca"/>
<path d="M304.8 25.3H311.5Q317.8 25.3 317.8 31.6V44.2Q317.8 50.5 311.5 50.5H304.6Q298.3 50.5 298.3 44.2V31.8Q298.3 25.3 304.8 25.3Z" fill="#b47ee8"/>
<path d="M304.8 25.3H311.5Q317.8 25.3 317.8 31.6" fill="none" stroke="#d3b0f4" stroke-width="1"/>
<path d="M307.6 25.8V50.2M298.5 40H317.6" stroke="#9c66d8" stroke-width="0.8"/>
<polygon points="318.4,23.5 319.47,27.71 323.21,25.49 320.99,29.23 325.2,30.3 320.99,31.37 323.21,35.11 319.47,32.89 318.4,37.1 317.33,32.89 313.59,35.11 315.81,31.37 311.6,30.3 315.81,29.23 313.59,25.49 317.33,27.71" fill="#f5a200" />
<polygon points="345.3,27.6 349.6,23.3 352,23.3 352,50.5 345.3,50.5" fill="#d6d6d6" stroke="#6c6c6c" stroke-width="0.9" stroke-linejoin="round" />
<polygon points="351.6,27.6 355.9,23.3 363.8,23.3 359.5,27.6" fill="#84c6f5" />
<polygon points="359.5,27.6 363.8,23.3 363.8,46.2 359.5,50.5" fill="#3f8fd3" />
<polygon points="351.6,27.6 359.5,27.6 359.5,50.5 351.6,50.5" fill="#5aa9e6" />
<path d="M361.6 36.6H367" stroke="#fff" stroke-width="2.4"/><path d="M361.6 36.6H367" stroke="#2c2c2c" stroke-width="1.1"/><polygon points="366,34.4 370,36.6 366,38.8" fill="#2c2c2c" />
<polygon points="381.3,29.8 387.7,23.3 396.5,23.3 392,29.8" fill="#f0f0f0" stroke="#7a7a7a" stroke-width="0.9" stroke-linejoin="round" />
<path d="M402.9 41.5L408.9 35.5V44.3L402.9 50.5Z" fill="#bfbfbf" stroke="#7a7a7a" stroke-width="0.9" stroke-linejoin="round"/>
<path d="M381.3 50.5V29.8H391Q402.9 30.6 402.9 41.5V50.5Z" fill="#dcdcdc" stroke="#7a7a7a" stroke-width="0.9" stroke-linejoin="round"/>
<path d="M391 29.8Q402.9 30.6 402.9 41.5L408.9 35.5Q408.2 24.6 396.5 23.3L392 29.8Z" fill="#5aa9e6"/>
<path d="M391 29.8Q402.9 30.6 402.9 41.5" fill="none" stroke="#dff0fc" stroke-width="1"/>
<polygon points="418.2,29.8 424.6,23.3 445.8,23.3 439.5,29.8" fill="#f0f0f0" stroke="#7a7a7a" stroke-width="0.9" stroke-linejoin="round" />
<polygon points="439.5,29.8 445.8,23.3 445.8,44.1 439.5,50.5" fill="#bfbfbf" stroke="#7a7a7a" stroke-width="0.9" stroke-linejoin="round" />
<polygon points="418.2,29.8 439.5,29.8 439.5,50.5 418.2,50.5" fill="#e2e2e2" stroke="#7a7a7a" stroke-width="0.9" stroke-linejoin="round" />
<rect x="422.3" y="33.9" width="13.4" height="12.6" fill="#f6f6f6"/>
<polygon points="422.3,33.9 428.7,33.9 428.7,40.9 422.3,46.5" fill="#3f8fd3" />
<polygon points="428.7,40.9 435.7,40.9 435.7,46.5 422.3,46.5" fill="#84c6f5" />
<polygon points="464.4,27 468.2,23.3 482.9,23.3 480.5,27" fill="#84c6f5" />
<polygon points="480.5,27 482.9,23.3 482.9,37.5 480.5,40.2" fill="#3f8fd3" />
<polygon points="464.4,27 480.5,27 480.5,40.2 464.4,40.2" fill="#5aa9e6" />
<polygon points="455.7,34.9 458.7,31.9 466,31.9 466,34.9" fill="#84c6f5" />
<polygon points="472.7,40.2 474.8,40.2 474.8,47.6 472.7,50.5" fill="#3f8fd3" />
<polygon points="455.7,34.9 472.7,34.9 472.7,50.5 455.7,50.5" fill="#5aa9e6" />
<polygon points="464.4,34.9 472.7,34.9 472.7,40.2 480.5,40.2 474.8,40.2 472.7,40.2" fill="#5aa9e6" />
<polygon points="494.4,26.6 497.6,23.3 518.4,23.3 516.1,26.6" fill="#84c6f5" />
<polygon points="516.1,26.6 518.4,23.3 518.4,33.2 516.1,36.2" fill="#3f8fd3" />
<polygon points="494.4,26.6 516.1,26.6 516.1,36.2 494.4,36.2" fill="#5aa9e6" />
<polygon points="494.4,40 513.8,40 513.8,49.7 494.4,49.7" fill="#dedede" stroke="#8a8a8a" stroke-width="0.9" stroke-linejoin="round" />
<polygon points="513.8,40 518.4,37.4 518.4,46.8 513.8,49.7" fill="#c6c6c6" stroke="#8a8a8a" stroke-width="0.9" stroke-linejoin="round" />
<path d="M492.6 39.2H513.6L519.8 32.6" fill="none" stroke="#8fd2fb" stroke-width="1.6"/>
<path d="M543.4 27.200000000000003V47.2M533.4 37.2H553.4" stroke="#2c2c2c" stroke-width="2"/>
<polygon points="539.6,29.6 543.4,23.800000000000004 547.1999999999999,29.6" fill="#2c2c2c" /><polygon points="539.6,44.800000000000004 543.4,50.6 547.1999999999999,44.800000000000004" fill="#2c2c2c" /><polygon points="535.8,33.400000000000006 530.0,37.2 535.8,41.0" fill="#2c2c2c" /><polygon points="551.0,33.400000000000006 556.8,37.2 551.0,41.0" fill="#2c2c2c" />
<polygon points="576.3,39.8 588.4,39.8 588.4,50.5 576.3,50.5" fill="#e2e2e2" stroke="#9a9a9a" stroke-width="0.7" stroke-linejoin="round" />
<polygon points="588.4,39.8 592.4,35.6 603.1,35.6 599.2,39.8" fill="#f2f2f2" stroke="#9a9a9a" stroke-width="0.7" stroke-linejoin="round" />
<polygon points="599.2,39.8 603.1,35.6 603.1,46.6 599.2,50.5" fill="#c4c4c4" stroke="#9a9a9a" stroke-width="0.7" stroke-linejoin="round" />
<polygon points="588.4,39.8 599.2,39.8 599.2,50.5 588.4,50.5" fill="#dedede" stroke="#9a9a9a" stroke-width="0.7" stroke-linejoin="round" />
<polygon points="576.3,29.6 579.3,26.6 591,26.6 589,29.6" fill="#84c6f5" />
<polygon points="589,29.6 591,26.6 591,37 589,39.8" fill="#3f8fd3" />
<polygon points="576.3,29.6 589,29.6 589,39.8 576.3,39.8" fill="#5aa9e6" />
<polygon points="596.7,24.0 597.73,28.11 601.37,25.93 599.19,29.57 603.3,30.6 599.19,31.63 601.37,35.27 597.73,33.09 596.7,37.2 595.67,33.09 592.03,35.27 594.21,31.63 590.1,30.6 594.21,29.57 592.03,25.93 595.67,28.11" fill="#f5a200" />
<path d="M615.2 30.6L621.6 25.2L625 25.8V34.6L620.2 36.8V45.4L615.2 48.6Z" fill="#cdcdcd" stroke="#7c7c7c" stroke-width="0.9" stroke-linejoin="round"/>
<path d="M621.6 25.2V36" fill="none" stroke="#9a9a9a" stroke-width="0.7"/>
<path d="M628.6 32.8L634.2 26.4L639 32V48.6L633.6 44.6L628.6 42.4V37.6L630.4 36.8V33.4Z" fill="#d3d3d3" stroke="#7c7c7c" stroke-width="0.9" stroke-linejoin="round"/>
<path d="M634.2 26.4V44.8" fill="none" stroke="#9a9a9a" stroke-width="0.7"/><path d="M622.6 37.5V40.5" stroke="#7d8fb0" stroke-width="0.8"/>
<polygon points="662.4,30.2 670,23.2 677.4,23.2 669.9,30.2" fill="#efefef" stroke="#808080" stroke-width="0.8" stroke-linejoin="round" />
<polygon points="662.4,30.2 669.9,30.2 669.9,49.6 662.4,49.6" fill="#dcdcdc" stroke="#808080" stroke-width="0.8" stroke-linejoin="round" />
<polygon points="669.9,30.2 677.4,23.2 677.4,42.4 669.9,49.6" fill="#4fbe74" />
<polygon points="680.7,31.2 688.7,24.4 688.7,42 680.7,49" fill="#ef9f62" />
<path d="M714.2 29.8V38.4M738.2 29.8V38.4" stroke="#555" stroke-width="1"/><path d="M717 34.1H735.4" stroke="#555" stroke-width="1"/>
<polygon points="715,34.1 719,32.1 719,36.1" fill="#444" /><polygon points="737.4,34.1 733.4,32.1 733.4,36.1" fill="#444" />
<rect x="714.1" y="39" width="24.2" height="4.9" fill="#f2aa1c"/>
<path d="M716.0 39V41.2M718.9 39V41.2M721.8 39V41.2M724.7 39V41.2M727.6 39V41.2M730.5 39V41.2M733.4 39V41.2M736.3 39V41.2" stroke="#b97f10" stroke-width="0.7"/>
<rect x="764.2" y="24.2" width="25" height="24.6" fill="#80c4f4"/>
<polygon points="764.2,48.8 764.2,41.8 771.4,34.4 778,42.8 782.6,38.8 789.2,44.8 789.2,48.8" fill="#4a90c9" />
<circle cx="782.4" cy="31" r="2.7" fill="#fff"/>
<rect x="811.9" y="20.9" width="32.6" height="32.3" fill="#1a93d3"/>
<rect x="814.9" y="23.9" width="23.8" height="17.8" fill="none" stroke="#63bdeb" stroke-width="1" stroke-dasharray="3 2"/>
<polygon points="832.4,35.9 832.4,48.6 835.4,46 837.7,50.8 839.7,49.8 837.4,45.2 841.6,45" fill="#fff" /><rect x="2.6" y="74.4" width="257.6" height="21" fill="#f1f1f1" stroke="#d4d4d4" stroke-width="1"/>
<polygon points="7.4,85.6 11.2,83.2 11.2,88" fill="#333" /><polygon points="12,85.6 15.8,83.2 15.8,88" fill="#333" />
<text x="24.2" y="87.7" font-size="8.5" fill="#333" textLength="26.6" lengthAdjust="spacingAndGlyphs">ブラウザ</text>
<circle cx="246.7" cy="85" r="3.8" fill="#2a2a2a"/><rect x="244.5" y="84.4" width="4.4" height="1.2" fill="#f1f1f1"/>
<rect x="257" y="80" width="1.2" height="10" fill="#666"/><rect x="259.2" y="81.5" width="0.8" height="7" fill="#aaa"/>
<rect x="34.3" y="101.8" width="185" height="13.8" fill="#efefef"/>
<polygon points="18,113.5 27,113.5 27,104.4" fill="#8a8a8a" stroke="#333" stroke-width="1.0" stroke-linejoin="round" />
<path d="M36.800000000000004 108.8Q43.2 101.2 49.6 108.8Q43.2 116.39999999999999 36.800000000000004 108.8Z" fill="#9b9b9b"/><circle cx="43.2" cy="108.8" r="2.9" fill="#f3f3f3"/><circle cx="43.2" cy="108.8" r="1.7" fill="#9b9b9b"/>
<rect x="55" y="102.2" width="143.4" height="13.2" fill="#9b9b9b"/>
<polygon points="58.6,106.2 61.4,103.2 71.4,103.2 68.8,106.2" fill="#fdfdfd" stroke="#8a8a8a" stroke-width="0.7" stroke-linejoin="round" /><polygon points="68.8,106.2 71.4,103.2 71.4,111.6 68.8,114.4" fill="#dcdcdc" stroke="#8a8a8a" stroke-width="0.7" stroke-linejoin="round" /><polygon points="58.6,106.2 68.8,106.2 68.8,114.4 58.6,114.4" fill="#f4f4f4" stroke="#8a8a8a" stroke-width="0.7" stroke-linejoin="round" />
<text x="83.2" y="112.24" font-size="9.3" font-weight="bold" fill="#fff" textLength="105.4" lengthAdjust="spacingAndGlyphs">Naroco Leading#1-F v3</text>
<circle cx="207.6" cy="109.4" r="5.9" fill="#cfcfcf" stroke="#8e8e8e" stroke-width="1"/>
<path d="M203.8 108.6L207 112.2L213.6 103.6" fill="none" stroke="#2f6f2f" stroke-width="2.8" stroke-linecap="round" stroke-linejoin="round"/><path d="M203.8 108.6L207 112.2L213.6 103.6" fill="none" stroke="#6fc46f" stroke-width="1.4" stroke-linecap="round" stroke-linejoin="round"/>
<rect x="49.2" y="122.4" width="101.39999999999999" height="14" fill="#efefef"/>
<path d="M35 124.4L41.3 129.4L35 134.4Z" fill="#f8f8f8" stroke="#444" stroke-width="1.2" stroke-linejoin="round"/>
<polygon points="64.87,128.43 64.87,130.97 63.06,131.18 62.80,131.81 63.93,133.24 62.14,135.03 60.71,133.90 60.08,134.16 59.87,135.97 57.33,135.97 57.12,134.16 56.49,133.90 55.06,135.03 53.27,133.24 54.40,131.81 54.14,131.18 52.33,130.97 52.33,128.43 54.14,128.22 54.40,127.59 53.27,126.16 55.06,124.37 56.49,125.50 57.12,125.24 57.33,123.43 59.87,123.43 60.08,125.24 60.71,125.50 62.14,124.37 63.93,126.16 62.80,127.59 63.06,128.22" fill="#8c8c8c"/><circle cx="58.6" cy="129.70000000000002" r="2.2" fill="#efefef"/>
<text x="77.4" y="132.7" font-size="8.5" fill="#2e2e2e" textLength="66.9" lengthAdjust="spacingAndGlyphs">ドキュメントの設定</text>
<rect x="49.2" y="143.1" width="77.1" height="14" fill="#efefef"/>
<path d="M35 145.1L41.3 150.1L35 155.1Z" fill="#f8f8f8" stroke="#444" stroke-width="1.2" stroke-linejoin="round"/>
<path d="M51.9 145.1h5l1.2 1.6h7.3v8.6h-13.5z" fill="#8f8f8f"/><path d="M51.9 147.7h13.5" stroke="#f0f0f0" stroke-width="0.7"/>
<text x="76" y="153.4" font-size="8.5" fill="#2e2e2e" textLength="40.3" lengthAdjust="spacingAndGlyphs">ビュー管理</text>
<rect x="49.2" y="163.9" width="78.39999999999999" height="14" fill="#efefef"/>
<path d="M35 165.9L41.3 170.9L35 175.9Z" fill="#f8f8f8" stroke="#444" stroke-width="1.2" stroke-linejoin="round"/>
<path d="M52.2 170.9Q58.6 163.3 65.0 170.9Q58.6 178.5 52.2 170.9Z" fill="#d6d6d6"/><circle cx="58.6" cy="170.9" r="2.9" fill="#f3f3f3"/><circle cx="58.6" cy="170.9" r="1.7" fill="#d6d6d6"/><path d="M53.6 165.9L63.6 175.9" stroke="#efefef" stroke-width="2.6"/><path d="M54.0 166.3L63.2 175.5" stroke="#d6d6d6" stroke-width="1.1"/>
<path d="M73.5 165.9h5l1.2 1.6h7.3v8.6h-13.5z" fill="#8f8f8f"/><path d="M73.5 168.5h13.5" stroke="#f0f0f0" stroke-width="0.7"/>
<text x="98.8" y="174.2" font-size="8.5" fill="#2e2e2e" textLength="17.7" lengthAdjust="spacingAndGlyphs">原点</text>
<rect x="49.2" y="184.6" width="78.39999999999999" height="14" fill="#efefef"/>
<path d="M35 186.6L41.3 191.6L35 196.6Z" fill="#f8f8f8" stroke="#444" stroke-width="1.2" stroke-linejoin="round"/>
<path d="M52.2 191.6Q58.6 184.0 65.0 191.6Q58.6 199.2 52.2 191.6Z" fill="#9b9b9b"/><circle cx="58.6" cy="191.6" r="2.9" fill="#f3f3f3"/><circle cx="58.6" cy="191.6" r="1.7" fill="#9b9b9b"/>
<path d="M73.5 186.6h5l1.2 1.6h7.3v8.6h-13.5z" fill="#8f8f8f"/><path d="M73.5 189.2h13.5" stroke="#f0f0f0" stroke-width="0.7"/>
<text x="98.8" y="195" font-size="8.5" fill="#2e2e2e" textLength="20.7" lengthAdjust="spacingAndGlyphs">ボディ</text>
<rect x="49.2" y="205.2" width="85.3" height="14" fill="#efefef"/>
<path d="M35 207.2L41.3 212.2L35 217.2Z" fill="#f8f8f8" stroke="#444" stroke-width="1.2" stroke-linejoin="round"/>
<path d="M52.2 212.2Q58.6 204.6 65.0 212.2Q58.6 219.79999999999998 52.2 212.2Z" fill="#9b9b9b"/><circle cx="58.6" cy="212.2" r="2.9" fill="#f3f3f3"/><circle cx="58.6" cy="212.2" r="1.7" fill="#9b9b9b"/>
<path d="M73.5 207.2h5l1.2 1.6h7.3v8.6h-13.5z" fill="#8f8f8f"/><path d="M73.5 209.79999999999998h13.5" stroke="#f0f0f0" stroke-width="0.7"/>
<text x="98.8" y="215.6" font-size="8.5" fill="#2e2e2e" textLength="26.5" lengthAdjust="spacingAndGlyphs">スケッチ</text>
<rect x="49.2" y="226.1" width="119.99999999999999" height="14" fill="#efefef"/>
<path d="M35 228.1L41.3 233.1L35 238.1Z" fill="#f8f8f8" stroke="#444" stroke-width="1.2" stroke-linejoin="round"/>
<path d="M52.2 233.1Q58.6 225.5 65.0 233.1Q58.6 240.7 52.2 233.1Z" fill="#9b9b9b"/><circle cx="58.6" cy="233.1" r="2.9" fill="#f3f3f3"/><circle cx="58.6" cy="233.1" r="1.7" fill="#9b9b9b"/>
<path d="M73.5 228.1h5l1.2 1.6h7.3v8.6h-13.5z" fill="#8f8f8f"/><path d="M73.5 230.7h13.5" stroke="#f0f0f0" stroke-width="0.7"/>
<text x="98.8" y="236.4" font-size="8.5" fill="#2e2e2e" textLength="61.2" lengthAdjust="spacingAndGlyphs">コンストラクション</text>
<rect x="2.6" y="782.2" width="258.4" height="20.4" fill="#f1f1f1" stroke="#d6d6d6" stroke-width="1"/>
<text x="23" y="795.7" font-size="8.5" fill="#333" textLength="27.8" lengthAdjust="spacingAndGlyphs">コメント</text>
<circle cx="246.8" cy="792.3" r="3.8" fill="#2a2a2a"/><rect x="244.6" y="791.7" width="4.4" height="1.2" fill="#f1f1f1"/><rect x="246.2" y="790.1" width="1.2" height="4.4" fill="#f1f1f1"/>
<rect x="257.4" y="787.4" width="1.2" height="10" fill="#666"/><rect x="259.6" y="789" width="0.8" height="7" fill="#aaa"/>
<rect x="0" y="806.4" width="1300" height="5.6" fill="#f0f0f0"/><rect x="0" y="806" width="1300" height="1" fill="#d2d2d2"/><rect x="544" y="783" width="219" height="20" fill="#f0f0f0"/>
<path d="M554 799.6V788.4" stroke="#2e2e2e" stroke-width="1.2"/><polygon points="551.6,789.6 554,785.8 556.4,789.6" fill="#2e2e2e" />
<path d="M556.6 791.2Q561.2 792.4 561 794.2Q560.2 796.8 554 797Q549.4 796.9 548.4 795.4" fill="none" stroke="#2e2e2e" stroke-width="1.2"/><polygon points="550.6,792.4 547,794.6 550.8,796.8" fill="#2e2e2e" />
<polygon points="565.3,791.2 569.5,791.2 567.4,794.2" fill="#222" />
<rect x="576" y="791.2" width="13" height="8.6" fill="#f4f4f4" stroke="#2e2e2e" stroke-width="1.1"/><rect x="578.6" y="794" width="7.8" height="3.2" fill="#a8a8a8" stroke="#2e2e2e" stroke-width="0.8"/>
<path d="M577 790.2L580.4 787.6M581.6 790.4L586 786.6M586.4 790.4L588.6 788.4" stroke="#2e2e2e" stroke-width="1" fill="none"/>
<path d="M601.4 799.8Q599.2 796.4 598.4 794.2Q598.2 792.8 599.4 793Q600.6 793.6 601.4 795.2V789.2Q601.5 788.2 602.4 788.2Q603.3 788.2 603.4 789.2V792.6V787.8Q603.5 786.8 604.5 786.8Q605.5 786.8 605.6 787.8V792.6V788.4Q605.7 787.5 606.7 787.5Q607.7 787.5 607.8 788.4V793V790Q607.9 789.1 608.8 789.1Q609.7 789.1 609.8 790V795.4Q609.6 798 608.2 799.8Z" fill="#fafafa" stroke="#2e2e2e" stroke-width="0.9" stroke-linejoin="round"/>
<circle cx="625.4" cy="792.2" r="4.3" fill="#f8f8f8" stroke="#2e2e2e" stroke-width="1.2"/><path d="M628.6 795.6L632.4 799.4" stroke="#2e2e2e" stroke-width="2.2" stroke-linecap="round"/>
<path d="M630.4 788.2H634M632.2 786.4V790M630.6 791.6H633.8" stroke="#2e2e2e" stroke-width="0.9"/>
<rect x="643" y="786.6" width="13.6" height="13" fill="none" stroke="#555" stroke-width="0.8" stroke-dasharray="1.6 1.4"/>
<circle cx="649" cy="792.2" r="5.2" fill="#f8f8f8" stroke="#2e2e2e" stroke-width="1.2"/><path d="M652.8 796.2L656.6 800" stroke="#2e2e2e" stroke-width="2.4" stroke-linecap="round"/>
<polygon points="661.3,791.2 665.5,791.2 663.4,794.2" fill="#222" />
<rect x="679" y="786.8" width="12.8" height="10.6" fill="#eef2f8" stroke="#2e2e2e" stroke-width="1.1"/><rect x="680.8" y="788.6" width="9.2" height="7" fill="#8eaedb" stroke="#56719c" stroke-width="0.6"/><path d="M682.4 799.6H688.6M685.5 797.4V799.6" stroke="#2e2e2e" stroke-width="1.1"/>
<polygon points="693.9,791.2 698.1,791.2 696,794.2" fill="#222" />
<rect x="705.2" y="786.4" width="13.6" height="13.6" fill="#e9e9e9" stroke="#444" stroke-width="0.9"/><path d="M707.9200000000001 786.4V800M705.2 789.12H718.8M710.6400000000001 786.4V800M705.2 791.84H718.8M713.36 786.4V800M705.2 794.56H718.8M716.08 786.4V800M705.2 797.28H718.8" stroke="#555" stroke-width="0.7"/>
<polygon points="720.5,791.2 724.7,791.2 722.6,794.2" fill="#222" />
<rect x="731" y="787" width="13" height="11" fill="#6f92ca" stroke="#31466e" stroke-width="0.9"/><path d="M737.5 787V798M731 792.5H744" stroke="#eef2f8" stroke-width="1.1"/>
<polygon points="747.3,791.2 751.5,791.2 749.4,794.2" fill="#222" />
<ellipse cx="1262" cy="158" rx="22" ry="6" fill="#000" opacity="0.05"/>
<polygon points="1253.7,95.3 1283.5,108.9 1253.7,124.5 1225.5,107.5" fill="#f5f5f5" stroke="#9c9c9c" stroke-width="0.8" stroke-linejoin="round" />
<polygon points="1225.5,107.5 1253.7,124.5 1254.4,159.7 1226.6,141.4" fill="#ececec" stroke="#9c9c9c" stroke-width="0.8" stroke-linejoin="round" />
<polygon points="1253.7,124.5 1283.5,108.9 1282.1,142.8 1254.4,159.7" fill="#e4e4e4" stroke="#9c9c9c" stroke-width="0.8" stroke-linejoin="round" />
<g transform="matrix(1.4900 0.6800 -1.4100 0.6100 1253.70 95.30)"><text x="10" y="14.4" font-size="11.5" text-anchor="middle" fill="#8c8c8c">上</text></g>
<g transform="matrix(1.4100 0.8500 0.0550 1.6950 1225.50 107.50)"><text x="10" y="14.4" font-size="11.5" text-anchor="middle" fill="#8c8c8c">前</text></g>
<g transform="matrix(1.4900 -0.7800 0.0350 1.7600 1253.70 124.50)"><text x="10" y="14.4" font-size="11.5" text-anchor="middle" fill="#8c8c8c">右</text></g>
<path d="M1222.6 102L1226.3 141.4" stroke="#7d7dcf" stroke-width="1.8"/><path d="M1226.3 141.4L1257.8 163" stroke="#f2a7a7" stroke-width="1.6"/>
<text x="1217.7" y="100.68" font-size="10" fill="#7474c8">Z</text><text x="1259.8" y="172.48" font-size="10" fill="#ee8a8a">X</text></svg>
</body></html>
